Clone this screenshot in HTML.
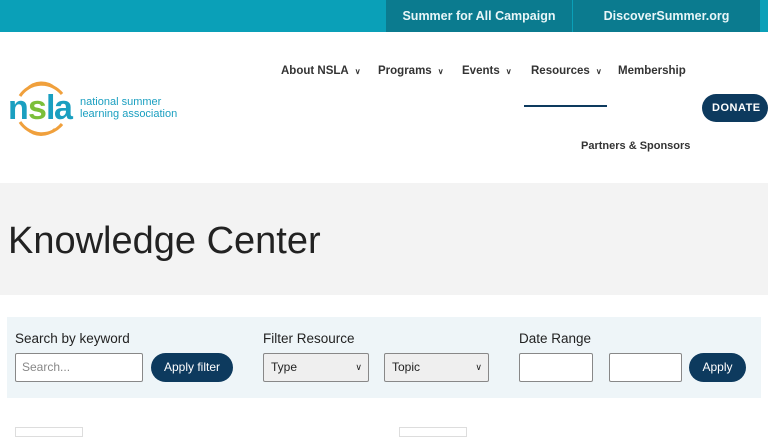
<!DOCTYPE html>
<html><head><style>
*{margin:0;padding:0;box-sizing:border-box}
body{width:768px;height:432px;overflow:hidden;background:#fff;font-family:"Liberation Sans",sans-serif;position:relative;color:#222}
.abs{position:absolute}
.top{left:0;top:0;width:768px;height:32px;background:#0aa0b8}
.blk{top:0;height:32px;background:#0b7b8f;color:#e8f6f8;font-weight:bold;font-size:12.5px;line-height:33px;text-align:center}
.nav{font-size:11.5px;font-weight:bold;color:#333;top:65px}
.chev{font-size:8px;margin-left:6px}
.sel{top:353px;height:29px;background:#efefef;border:1px solid #888;border-radius:2px;font-size:12px;line-height:27px;padding-left:7px}
.inp{top:353px;height:29px;background:#fff;border:1px solid #888;border-radius:2px}
.btn{top:353px;height:29px;background:#0d3a5e;color:#fff;border-radius:15px;font-size:12px;line-height:29px;text-align:center}
.lbl{font-size:13.5px;color:#222;top:331px}
</style></head><body>
<div class="abs top"></div>
<div class="abs blk" style="left:386px;width:186px">Summer for All Campaign</div>
<div class="abs blk" style="left:573px;width:187px">DiscoverSummer.org</div>

<svg class="abs" style="left:6px;top:76px" width="70" height="64" viewBox="0 0 70 64">
<path d="M14 20 A26 26 0 0 1 56 18" stroke="#f0a03c" stroke-width="3" fill="none"/>
<path d="M21 13 A20 20 0 0 1 49 12" stroke="#f0a03c" stroke-width="2.5" fill="none"/>
<path d="M14 46 A26 26 0 0 0 56 48" stroke="#f0a03c" stroke-width="3" fill="none"/>
<path d="M21 53 A20 20 0 0 0 49 53" stroke="#f0a03c" stroke-width="2.5" fill="none"/>
<text x="2" y="43" font-family="Liberation Sans" font-weight="bold" font-size="34" fill="#1a9fc0">n</text>
<text x="22" y="43" font-family="Liberation Sans" font-weight="bold" font-size="34" fill="#7cbf3a">s</text>
<text x="40" y="43" font-family="Liberation Sans" font-weight="bold" font-size="34" fill="#1a9fc0">l</text>
<text x="48" y="43" font-family="Liberation Sans" font-weight="bold" font-size="34" fill="#1a9fc0">a</text>
</svg>
<div class="abs" style="left:80px;top:97px;font-size:11px;line-height:11.5px;color:#1a9fc0">national summer<br>learning association</div>

<div class="abs nav" style="left:281px">About NSLA<span class="chev">&#8744;</span></div>
<div class="abs nav" style="left:378px">Programs<span class="chev">&#8744;</span></div>
<div class="abs nav" style="left:462px">Events<span class="chev">&#8744;</span></div>
<div class="abs nav" style="left:531px">Resources<span class="chev">&#8744;</span></div>
<div class="abs nav" style="left:618px">Membership</div>
<div class="abs" style="left:524px;top:105px;width:83px;height:2px;background:#0d3a5e"></div>
<div class="abs" style="left:702px;top:94px;width:66px;height:28px;background:#0d3a5e;border-radius:14px;color:#fff;font-weight:bold;font-size:11px;line-height:28px;padding-left:10px;letter-spacing:.5px">DONATE</div>
<div class="abs nav" style="left:581px;top:140px;font-size:11px">Partners &amp; Sponsors</div>

<div class="abs" style="left:0;top:183px;width:768px;height:112px;background:#f3f3f3"></div>
<div class="abs" style="left:8px;top:220px;font-size:38px;color:#222">Knowledge Center</div>

<div class="abs" style="left:7px;top:317px;width:754px;height:81px;background:#eef5f8"></div>
<div class="abs lbl" style="left:15px">Search by keyword</div>
<div class="abs lbl" style="left:263px">Filter Resource</div>
<div class="abs lbl" style="left:519px">Date Range</div>
<div class="abs inp" style="left:15px;width:128px;font-size:12px;color:#888;line-height:27px;padding-left:6px">Search...</div>
<div class="abs btn" style="left:151px;width:82px">Apply filter</div>
<div class="abs sel" style="left:263px;width:106px">Type<span style="position:absolute;right:6px;font-size:9px">&#8744;</span></div>
<div class="abs sel" style="left:384px;width:105px">Topic<span style="position:absolute;right:6px;font-size:9px">&#8744;</span></div>
<div class="abs inp" style="left:519px;width:74px"></div>
<div class="abs inp" style="left:609px;width:73px"></div>
<div class="abs btn" style="left:689px;width:57px">Apply</div>

<div class="abs" style="left:15px;top:427px;width:68px;height:10px;border:1px solid #ddd"></div>
<div class="abs" style="left:399px;top:427px;width:68px;height:10px;border:1px solid #ddd"></div>
</body></html>
